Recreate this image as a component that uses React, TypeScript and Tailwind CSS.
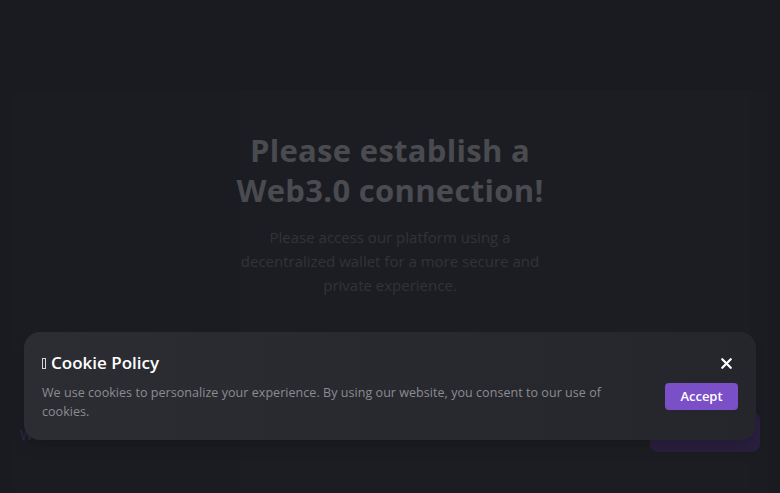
import { X } from 'lucide-react'

export default function App() {
    return (
        <div className="relative h-[493px] w-[780px] overflow-hidden bg-[#1a1b20] font-['Open_Sans',sans-serif]">

            {/*dimmed page behind*/}
            <div className="pt-[90px] px-[12px] h-full">
                <div className="flex h-full rounded-t-lg bg-[#1b1c21]">
                    <div className="w-[228px]" />
                    <div className="flex-1 mr-[18px] bg-[#1c1d22] flex flex-col items-center">
                        <h1 className="mt-[40px] w-[340px] -ml-[210px] text-center text-[31px] leading-[40px] font-bold text-[#4a4b50] tracking-[0.3px]">
                            Please establish a Web3.0 connection!
                        </h1>
                        <p className="mt-[15px] w-[310px] -ml-[210px] text-center text-[15px] leading-[24px] text-[#323338]">
                            Please access our platform using a decentralized wallet for a more secure and private experience.
                        </p>
                    </div>
                </div>
            </div>

            {/*floating stuff behind the banner*/}
            <span className="absolute left-[20px] top-[424px] text-[14px] text-[#2f2946]">W</span>
            <div className="absolute left-[650px] top-[412px] h-[40px] w-[110px] rounded-lg bg-[#291f3e]" />

            {/*cookie banner*/}
            <div className="absolute left-[24px] top-[332px] w-[732px] h-[108px] rounded-2xl bg-gradient-to-r from-[#2c2d32] to-[#25262b] px-[18px] pt-[20px] flex justify-between shadow-lg">
                <div className="w-[580px]">
                    <div className="flex items-center gap-[5px] text-[17px] leading-[22px] font-semibold text-white">
                        <span className="inline-block w-[4px] h-[11px] border border-white/80" />
                        Cookie Policy
                    </div>
                    <p className="mt-[9px] text-[12.5px] leading-[19px] tracking-[0.05px] text-[#8b8c91]">
                        We use cookies to personalize your experience. By using our website, you consent to our use of cookies.
                    </p>
                </div>
                <div className="flex flex-col items-end pt-[3px]">
                    <X className="mr-[3px] h-[17px] w-[17px] text-white" strokeWidth={3.2} />
                    <button className="mt-[11px] h-[27px] w-[73px] rounded bg-[#7a4fc8] text-[13px] font-semibold text-white">
                        Accept
                    </button>
                </div>
            </div>
        </div>
    )
}
